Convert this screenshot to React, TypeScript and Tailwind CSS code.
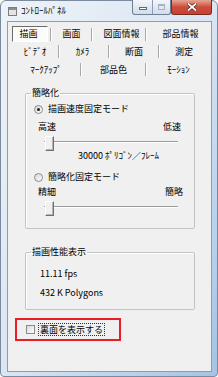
const font = "font-['Noto_Sans_CJK_JP','Noto_Sans',sans-serif]";

function Sep() {
  return <div className="h-[13px] w-[2px] border-l border-r border-l-[#a7a7a7] border-r-white" />;
}

function Radio({ checked = false }: { checked?: boolean }) {
  return (
    <span className="flex h-[9px] w-[9px] items-center justify-center rounded-full border border-[#8b8b8b] bg-linear-to-br from-[#d6d6d6] to-white">
      {checked && <span className="h-[3px] w-[3px] rounded-full bg-[#202020]" />}
    </span>
  );
}

function Slider() {
  return (
    <div className="relative ml-[18px] h-[15px] w-[134px]">
      <div className="absolute left-0 right-0 top-[5px] h-[2px] border-t border-b border-t-[#9c9c9c] border-b-white" />
      <div className="absolute left-[1px] top-0 h-[15px] w-[9px] border border-t-white border-l-white border-r-[#707070] border-b-[#707070] bg-[#f0f0f0] shadow-[inset_-1px_-1px_0_#b4b4b4]" />
    </div>
  );
}

function TitleBar() {
  return (
    <div className="flex h-[20px] items-start">
      <svg className="ml-[7px] mt-[6px]" width="9" height="9" viewBox="0 0 9 9">
        <rect x="0.5" y="0.5" width="8" height="8" fill="#e4e4e4" stroke="#7d7d7d" />
        <rect x="1" y="1" width="7" height="2" fill="#8e8e8e" />
      </svg>
      <span className="ml-[4px] mt-[4px] text-[9px] leading-[12px] text-black">ｺﾝﾄﾛｰﾙﾊﾟﾈﾙ</span>
      <div className="-mt-[1px] ml-auto mr-[5px] flex">
        <div className="flex h-[15px] w-[39px] overflow-hidden rounded-b-[3px] border border-t-0 border-[#6f7f95] bg-linear-to-b from-[#f3f6fa] to-[#d3dde9]">
          <div className="flex w-[20px] items-end justify-center border-r border-[#8d9cb0] pb-[4px]">
            <div className="h-[3px] w-[8px] border border-[#5d6b7d] bg-white" />
          </div>
          <div className="flex flex-1 items-center justify-center">
            <div className="h-[6px] w-[7px] border border-[#a5b1c0] border-t-2 bg-transparent" />
          </div>
        </div>
        <div className="flex h-[15px] w-[41px] items-center justify-center rounded-b-[3px] border border-t-0 border-[#7a2a20] bg-linear-to-b from-[#e8a494] via-[#cc4d3c] to-[#c8412f]">
          <svg width="10" height="8" viewBox="0 0 10 8">
            <path d="M1.5 1 L8.5 7 M8.5 1 L1.5 7" stroke="#5a1e16" strokeWidth="3.2" strokeLinecap="square" />
            <path d="M1.5 1 L8.5 7 M8.5 1 L1.5 7" stroke="#ffffff" strokeWidth="1.8" strokeLinecap="square" />
          </svg>
        </div>
      </div>
    </div>
  );
}

export default function App() {
  return (
    <div className={`h-[377px] w-[218px] overflow-hidden bg-white ${font}`}>
      <div className="flex h-full w-full flex-col rounded-t-[6px] rounded-b-[4px] border border-[#7b8a9c] bg-linear-to-br from-[#eef3f9] via-[#dae6f3] to-[#a4c3e6]">
        <TitleBar />
        <div className="ml-[6px] flex h-[351px] w-[205px] flex-col border border-[#8f9cad] bg-[#f0f0f0] text-[9px] leading-[12px] text-black">
          {/* tab rows */}
          <div className="mt-[4px] flex h-[16px] items-center pl-[4px]">
            <div className="mr-[2px] flex h-[16px] w-[36px] items-center justify-center border border-t-[#6b6b6b] border-l-[#6b6b6b] border-r-white border-b-white bg-[#fbfbfb] pr-[3px]">描画</div>
            <Sep />
            <div className="flex w-[39px] justify-center">画面</div>
            <Sep />
            <div className="flex w-[52px] justify-center pl-[5px]">図面情報</div>
            <Sep />
            <div className="flex w-[64px] justify-center pl-[3px]">部品情報</div>
          </div>
          <div className="mt-[1px] flex h-[17px] items-center pl-[4px]">
            <div className="flex w-[46px] justify-center">ﾋﾞﾃﾞｵ</div>
            <Sep />
            <div className="flex w-[48px] justify-center pr-[3px]">ｶﾒﾗ</div>
            <Sep />
            <div className="flex w-[48px] justify-center">断面</div>
            <Sep />
            <div className="flex w-[48px] justify-center">測定</div>
          </div>
          <div className="mt-[1px] flex h-[17px] items-center pl-[4px]">
            <div className="flex w-[68px] justify-center">ﾏｰｸｱｯﾌﾟ</div>
            <Sep />
            <div className="flex w-[63px] justify-center">部品色</div>
            <Sep />
            <div className="flex w-[63px] justify-center">ﾓｰｼｮﾝ</div>
          </div>

          {/* 簡略化 group */}
          <fieldset className="ml-[17px] mt-[10px] w-[170px] rounded-[2px] border border-[#c3c3c3] p-0 pb-[12px] shadow-[inset_1px_1px_0_#ffffff]">
            <legend className="ml-[5px] px-[1px] text-[9px] leading-[10px]">簡略化</legend>
            <div className="mt-[5px] flex h-[12px] items-center pl-[8px]">
              <Radio checked />
              <span className="ml-[5px]">描画速度固定モード</span>
            </div>
            <div className="mt-[6px] flex h-[12px] items-center justify-between pl-[12px] pr-[13px]">
              <span>高速</span>
              <span>低速</span>
            </div>
            <div className="mt-[3px]">
              <Slider />
            </div>
            <div className="h-[10px] pl-[52px] leading-[10px]">30000 ﾎﾟﾘｺﾞﾝ／ﾌﾚｰﾑ</div>
            <div className="mt-[10px] flex h-[12px] items-center pl-[8px]">
              <Radio />
              <span className="ml-[5px]">簡略化固定モード</span>
            </div>
            <div className="mt-[3px] flex h-[12px] items-center justify-between pl-[12px] pr-[11px]">
              <span>精細</span>
              <span>簡略</span>
            </div>
            <div className="mt-[3px]">
              <Slider />
            </div>
          </fieldset>

          {/* 描画性能表示 group */}
          <fieldset className="ml-[17px] mt-[18px] w-[170px] rounded-[2px] border border-[#c3c3c3] p-0 pb-[10px] shadow-[inset_1px_1px_0_#ffffff]">
            <legend className="ml-[5px] px-[1px] text-[9px] leading-[10px]">描画性能表示</legend>
            <div className="mt-[11px] h-[12px] pl-[14px]">11.11 fps</div>
            <div className="mt-[7px] h-[12px] pl-[14px]">432 K Polygons</div>
          </fieldset>

          {/* 裏面 checkbox, highlighted */}
          <div className="ml-[7px] mt-[8px] flex h-[23px] w-[106px] items-center border-2 border-[#ec1c24] pl-[9px]">
            <span className="h-[9px] w-[9px] border border-[#8b8b8b] bg-linear-to-br from-[#dadada] to-white" />
            <span className="ml-[3px] border border-dotted border-[#333] px-[1px] leading-[11px]">裏面を表示する</span>
          </div>
        </div>
      </div>
    </div>
  );
}
